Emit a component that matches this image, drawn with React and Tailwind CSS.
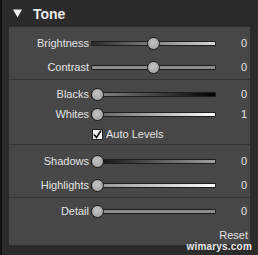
import React from "react";

const font = { fontFamily: '"Liberation Sans", Arial, sans-serif' };

function Slider({ label, value, pos, track }) {
  return (
    <div className="flex items-center h-full">
      <div className="w-[82px] text-right text-[11px] text-[#e2e2e2] pr-[2px] leading-none">{label}</div>
      <div className="relative w-[125px] h-[13px] flex items-center">
        <div className={`w-full h-[5px] rounded-[1px] border border-[#1e1e1e] ${track}`} />
        <div
          className="absolute top-0 w-[13px] h-[13px] rounded-full border border-[#1a1a1a] bg-[radial-gradient(circle_at_45%_40%,#c4c4c4,#9a9a9a)]"
          style={{ left: `${pos * 112}px` }}
        />
      </div>
      <div className="flex-1 text-right pr-[3px] text-[11px] text-[#e2e2e2] leading-none">{value}</div>
    </div>
  );
}

function Sep() {
  return <div className="h-[2px] border-t border-[#333] bg-[#4c4c4c]" />;
}

export default function App() {
  return (
    <div className="relative w-[258px] h-[255px] bg-[#2b2b2b] border-l-[2px] border-[#0f0f0f] flex flex-col" style={font}>
      <div className="h-[27px] flex items-center pl-[11px] shrink-0">
        <svg width="9" height="9" viewBox="0 0 9 9"><path d="M0 0.5 L9 0.5 L4.5 8.5 Z" fill="#eeeeee" /></svg>
        <span className="ml-[11px] text-[14px] text-[#eaeaea] font-bold leading-none">Tone</span>
      </div>
      <div className="ml-[7px] w-[241px] h-[218px] bg-[#474747] flex flex-col">
        <div className="pt-[4px] flex flex-col">
          <div className="h-[24px]"><Slider label="Brightness" value="0" pos={0.5} track="bg-[linear-gradient(90deg,#2a2a2a,#d8d8d8)]" /></div>
          <div className="h-[24px]"><Slider label="Contrast" value="0" pos={0.5} track="bg-[#8e8e8e]" /></div>
        </div>
        <Sep />
        <div className="pt-[4px] flex flex-col">
          <div className="h-[20px]"><Slider label="Blacks" value="0" pos={0} track="bg-[linear-gradient(90deg,#8a8a8a,#000)]" /></div>
          <div className="h-[20px]"><Slider label="Whites" value="1" pos={0} track="bg-[linear-gradient(90deg,#5a5a5a,#fff)]" /></div>
          <div className="h-[20px] flex items-center pl-[83px]">
            <div className="w-[11px] h-[11px] bg-[#eee] border border-[#222] flex items-center justify-center">
              <svg width="9" height="9" viewBox="0 0 9 9"><path d="M1 4.5 L3.5 7.5 L8 0.5" stroke="#111" strokeWidth="1.6" fill="none" /></svg>
            </div>
            <span className="ml-[3px] text-[11px] text-[#e2e2e2] leading-none">Auto Levels</span>
          </div>
        </div>
        <div className="h-[2px]" />
        <Sep />
        <div className="pt-[4px] flex flex-col">
          <div className="h-[24px]"><Slider label="Shadows" value="0" pos={0} track="bg-[linear-gradient(90deg,#0a0a0a,#a0a0a0)]" /></div>
          <div className="h-[24px]"><Slider label="Highlights" value="0" pos={0} track="bg-[linear-gradient(90deg,#909090,#fff)]" /></div>
        </div>
        <Sep />
        <div className="pt-[1px] flex flex-col">
          <div className="h-[24px]"><Slider label="Detail" value="0" pos={0} track="bg-[#8e8e8e]" /></div>
          <div className="h-[22px] flex items-center justify-end pr-[2px] pt-[2px] text-[11px] text-[#e2e2e2] leading-none">Reset</div>
        </div>
      </div>
      <div className="absolute right-[6px] bottom-[3px] text-[10px] font-bold text-[#e8e8e8] leading-none tracking-[0.2px]">wimarys.com</div>
    </div>
  );
}
